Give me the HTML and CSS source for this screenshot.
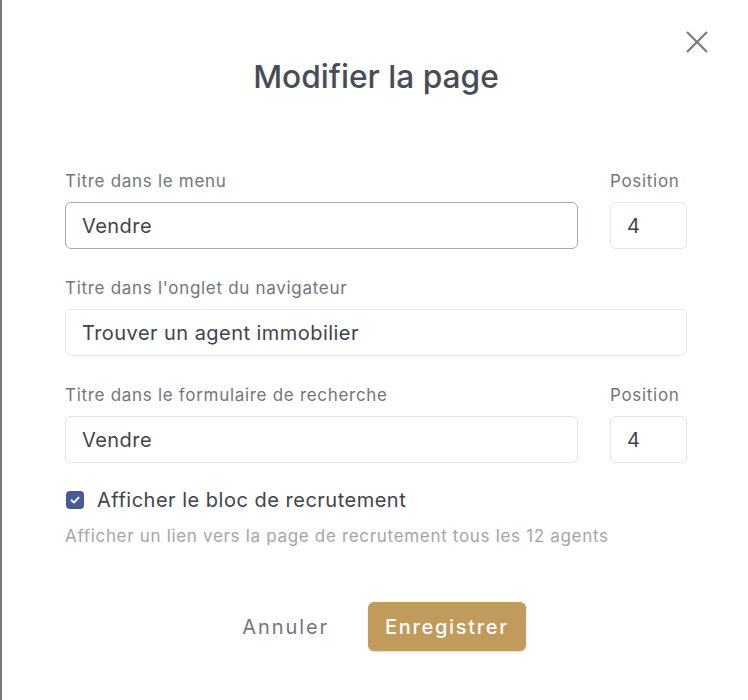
FILE: index.html
```html
<!DOCTYPE html>
<html lang="fr">
<head>
<meta charset="utf-8">
<title>Modifier la page</title>
<link rel="stylesheet" href="styles.css">
</head>
<body>
<div class="modal">
  <button class="close" aria-label="Fermer">
    <svg width="24" height="24" viewBox="0 0 24 24"><path d="M2 2 L22 22 M22 2 L2 22" stroke="#7a7a7a" stroke-width="2.2" fill="none"/></svg>
  </button>
  <h1 class="title">Modifier la page</h1>
  <form class="form">
    <div class="row">
      <div class="field grow">
        <label class="label">Titre dans le menu</label>
        <input class="input focused" type="text" value="Vendre">
      </div>
      <div class="field small">
        <label class="label">Position</label>
        <input class="input" type="text" value="4">
      </div>
    </div>
    <div class="row">
      <div class="field grow">
        <label class="label">Titre dans l'onglet du navigateur</label>
        <input class="input" type="text" value="Trouver un agent immobilier">
      </div>
    </div>
    <div class="row">
      <div class="field grow">
        <label class="label">Titre dans le formulaire de recherche</label>
        <input class="input" type="text" value="Vendre">
      </div>
      <div class="field small">
        <label class="label">Position</label>
        <input class="input" type="text" value="4">
      </div>
    </div>
    <div class="check-row">
      <span class="checkbox">
        <svg width="12" height="12" viewBox="0 0 12 12"><path d="M2.5 6.2 L5 8.6 L9.6 3.6" stroke="#fff" stroke-width="1.9" fill="none" stroke-linecap="round" stroke-linejoin="round"/></svg>
      </span>
      <span class="check-label">Afficher le bloc de recrutement</span>
    </div>
    <p class="help">Afficher un lien vers la page de recrutement tous les 12 agents</p>
    <div class="actions">
      <button type="button" class="btn-cancel">Annuler</button>
      <button type="button" class="btn-save">Enregistrer</button>
    </div>
  </form>
</div>
</body>
</html>
```

FILE: styles.css
```css
* { box-sizing: border-box; }
html, body { margin: 0; padding: 0; background: #fff; }
body {
  font-family: Inter, "Noto Sans", sans-serif;
  color: #3f444b;
  border-left: 2px solid #7b7b7b;
  min-height: 700px;
}
.modal {
  position: relative;
  padding: 52px 61px 0 63px;
}
.close {
  position: absolute;
  top: 28px;
  left: 681px;
  width: 28px;
  height: 28px;
  padding: 2px;
  border: 0;
  background: none;
}
.title {
  margin: 0;
  text-align: center;
  font-size: 31.7px;
  line-height: 50px;
  font-weight: 500;
  color: #474d55;
}
.form {
  margin-top: 67px;
  display: flex;
  flex-direction: column;
}
.row {
  display: flex;
  gap: 32px;
  margin-bottom: 27px;
}
.field { display: flex; flex-direction: column; }
.grow { flex: 1; }
.small { width: 77px; }
.label {
  font-size: 17px;
  line-height: 24px;
  color: #72767c;
  letter-spacing: 0.7px;
  margin-bottom: 9px;
  white-space: nowrap;
}
.input {
  height: 47px;
  border: 1px solid #e3e5e9;
  border-radius: 6px;
  padding: 0 16px;
  font-family: Inter, "Noto Sans", sans-serif;
  font-size: 20px;
  letter-spacing: 0.45px;
  color: #3f444b;
  background: #fff;
  outline: none;
  width: 100%;
}
.input.focused { border-color: #a3a9bb; }
.check-row {
  display: flex;
  align-items: center;
  gap: 13px;
  margin-top: -4px;
  height: 28px;
}
.checkbox {
  width: 18px;
  height: 18px;
  border-radius: 4px;
  background: #485a95;
  display: flex;
  align-items: center;
  justify-content: center;
  margin-left: 1px;
}
.check-label {
  font-size: 20px;
  color: #3f444b;
  letter-spacing: 0.5px;
}
.help {
  margin: 10px 0 0;
  font-size: 17px;
  line-height: 24px;
  color: #a3a6ab;
  letter-spacing: 0.68px;
}
.actions {
  display: flex;
  justify-content: center;
  align-items: center;
  gap: 39px;
  margin-top: 54px;
  padding-left: 16px;
}
.btn-cancel {
  border: 0;
  background: none;
  font-family: Inter, "Noto Sans", sans-serif;
  font-size: 20px;
  letter-spacing: 1.9px;
  color: #72767c;
  padding: 0;
}
.btn-save {
  border: 0;
  background: #c19b5c;
  color: #fff;
  font-family: Inter, "Noto Sans", sans-serif;
  font-size: 20px;
  font-weight: 500;
  letter-spacing: 1.7px;
  height: 49px;
  padding: 0 17px;
  border-radius: 6px;
  box-shadow: 0 1px 2px rgba(0,0,0,0.15);
}
```
